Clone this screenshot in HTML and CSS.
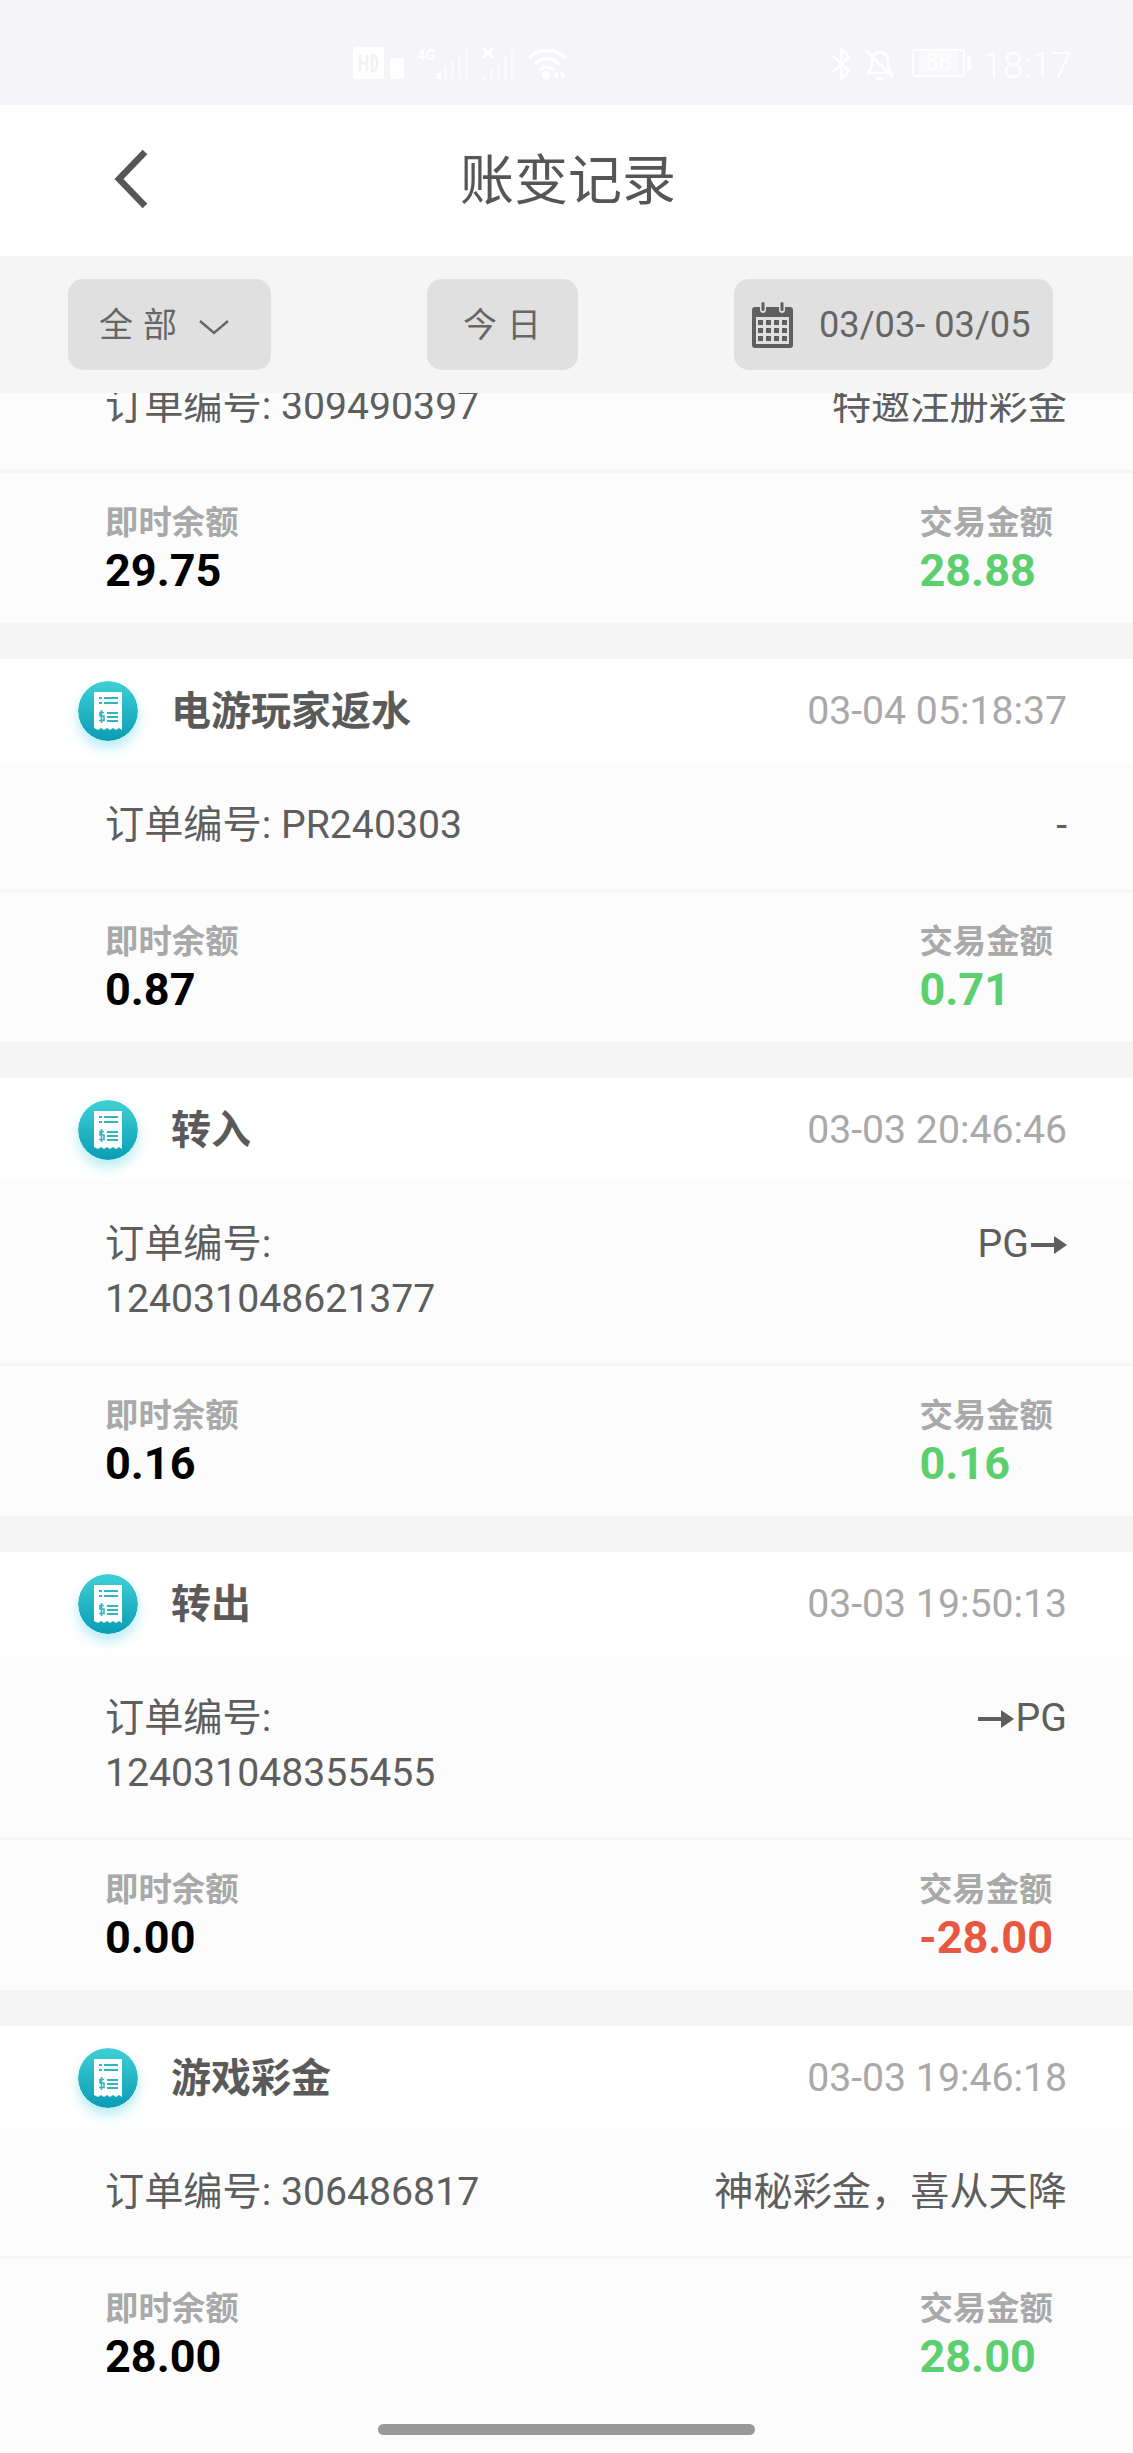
FILE: index.html
```html
<!DOCTYPE html>
<html lang="zh-CN">
<head>
    <meta charset="UTF-8">
    <title>账变记录</title>
    <link rel="stylesheet" href="styles.css">
</head>
<body>
    <!-- Iconos reutilizados -->
    <svg class="defs" width="0" height="0">
        <defs>
            <linearGradient id="tealGrad" x1="0" y1="0" x2="0" y2="1">
                <stop offset="0" stop-color="#3fd0d6"/>
                <stop offset="1" stop-color="#0a9cb4"/>
            </linearGradient>
            <symbol id="receipt" viewBox="0 0 60 60">
                <circle cx="30" cy="30" r="30" fill="url(#tealGrad)"/>
                <path d="M16 11H44V49L41 47L38 49L35 47L32 49L29 47L26 49L23 47L20 49L16 47Z" fill="#fff"/>
                <g fill="#2db6c4">
                    <rect x="21" y="16" width="3" height="2"/>
                    <rect x="26" y="16" width="14" height="2"/>
                    <rect x="21" y="21" width="3" height="2"/>
                    <rect x="26" y="21" width="14" height="2"/>
                    <rect x="29" y="31" width="11" height="2"/>
                    <rect x="29" y="35" width="11" height="2"/>
                    <rect x="29" y="39" width="11" height="2"/>
                </g>
                <path d="M26 31.5H22V35H26V39.500H21M23.500 29V42" fill="none" stroke="#2db6c4" stroke-width="1.600"/>
            </symbol>
        </defs>
    </svg>

    <div class="page">
        <!-- Barra de estado -->
        <div class="statusbar">
            <div class="status-group">
                <svg class="st-hd" width="51" height="32" viewBox="0 0 51 32">
                    <rect x="0" y="0" width="31" height="32" rx="3" fill="#fff"/>
                    <rect x="37" y="11" width="14" height="21" rx="2" fill="#fff"/>
                    <path d="M7 8V24M7 16H14M14 8V24M19 8V24C26 24 26 8 19 8Z" fill="none" stroke="#f0f0f6" stroke-width="2.500"/>
                </svg>
                <div class="st-signal">
                    <span class="st-tag">4G</span>
                    <svg width="33" height="32" viewBox="0 0 33 32">
                        <g fill="#fff">
                            <rect x="0" y="26" width="4" height="6"/>
                            <rect x="7" y="20" width="3" height="12" opacity=".55"/>
                            <rect x="14" y="14" width="3" height="18" opacity=".55"/>
                            <rect x="21" y="7" width="3" height="25" opacity=".55"/>
                            <rect x="28" y="0" width="3" height="32" opacity=".55"/>
                        </g>
                    </svg>
                </div>
                <svg class="st-cross" width="36" height="34" viewBox="0 0 36 34">
                    <path d="M1 1L11 11M11 1L1 11" stroke="#fff" stroke-width="3"/>
                    <g fill="#fff" opacity=".55">
                        <rect x="1" y="28" width="3" height="6"/>
                        <rect x="8" y="22" width="3" height="12"/>
                        <rect x="15" y="16" width="3" height="18"/>
                        <rect x="22" y="9" width="3" height="25"/>
                        <rect x="29" y="2" width="3" height="32"/>
                    </g>
                </svg>
                <svg class="st-wifi" width="40" height="33" viewBox="0 0 40 33">
                    <g fill="none" stroke="#fff" stroke-width="3.500">
                        <path d="M2 11C11 1 29 1 38 11"/>
                        <path d="M8 17C14 10 26 10 32 17"/>
                        <path d="M13 23C17 19 23 19 27 23"/>
                    </g>
                    <circle cx="19" cy="28" r="4" fill="#fff"/>
                    <path d="M31 24V32L26 28ZM34 24V32L39 28Z" fill="#fff"/>
                </svg>
            </div>
            <div class="status-group">
                <svg class="st-bt" width="21" height="34" viewBox="0 0 21 34">
                    <path d="M2 9L18 24L10 32V2L18 10L2 25" fill="none" stroke="#fff" stroke-width="2.600"/>
                </svg>
                <svg class="st-bell" width="30" height="34" viewBox="0 0 30 34">
                    <g fill="none" stroke="#fff" stroke-width="2.600">
                        <path d="M3 26H26C23 23 23 20 23 14C23 9 19 5 14.500 5C10 5 7 9 7 14C7 20 6 23 3 26Z"/>
                        <path d="M1 3L28 31"/>
                    </g>
                    <path d="M11 30H18V33H11Z" fill="#fff"/>
                </svg>
                <div class="st-battery"><span class="st-level">88</span></div>
                <span class="st-time">18:17</span>
            </div>
        </div>

        <!-- Cabecera -->
        <header class="topbar">
            <svg class="back" width="34" height="58" viewBox="0 0 34 58">
                <path d="M31 2L5 29L31 56" fill="none" stroke="#565656" stroke-width="6.500"/>
            </svg>
            <h1 class="title">账变记录</h1>
        </header>

        <!-- Filtros -->
        <div class="filters">
            <div class="chip chip-type">
                <span class="chip-label">全部</span>
                <svg class="chip-arrow" width="32" height="16" viewBox="0 0 32 16">
                    <path d="M2 2L16 14L30 2" fill="none" stroke="#666" stroke-width="2.400"/>
                </svg>
            </div>
            <div class="chip chip-today"><span class="chip-label">今日</span></div>
            <div class="chip chip-date">
                <svg width="41" height="46" viewBox="0 0 41 46">
                    <path d="M3 5H8V8C8 12 14 12 14 8V5H27V8C27 12 33 12 33 8V5H38C40 5 41 6 41 8V43C41 45 40 46 38 46H3C1 46 0 45 0 43V8C0 6 1 5 3 5Z" fill="#5f5f5f"/>
                    <rect x="9.500" y="0" width="3" height="9" rx="1.500" fill="#5f5f5f"/>
                    <rect x="28.500" y="0" width="3" height="9" rx="1.500" fill="#5f5f5f"/>
                    <rect x="4" y="15" width="33" height="27" fill="#e0e0e0"/>
                    <g fill="#5f5f5f">
                        <rect x="6" y="18" width="5" height="5"/><rect x="14" y="18" width="5" height="5"/><rect x="22" y="18" width="5" height="5"/><rect x="30" y="18" width="5" height="5"/>
                        <rect x="6" y="26" width="5" height="5"/><rect x="14" y="26" width="5" height="5"/><rect x="22" y="26" width="5" height="5"/><rect x="30" y="26" width="5" height="5"/>
                        <rect x="6" y="34" width="5" height="5"/><rect x="14" y="34" width="5" height="5"/><rect x="22" y="34" width="5" height="5"/><rect x="30" y="34" width="5" height="5"/>
                    </g>
                </svg>
                <span>03/03- 03/05</span>
            </div>
        </div>

        <!-- Lista de movimientos -->
        <div class="list">
            <section class="card card-cut">
                <div class="card-body">
                    <span class="order">订单编号: 309490397</span>
                    <span class="note">特邀注册彩金</span>
                </div>
                <div class="card-foot">
                    <div class="stat"><span class="stat-label">即时余额</span><span class="stat-value">29.75</span></div>
                    <div class="stat"><span class="stat-label">交易金额</span><span class="stat-value plus">28.88</span></div>
                </div>
            </section>

            <section class="card">
                <div class="card-head">
                    <svg class="receipt"><use href="#receipt"/></svg>
                    <span class="card-title">电游玩家返水</span>
                    <span class="card-time">03-04 05:18:37</span>
                </div>
                <div class="card-body">
                    <span class="order">订单编号: PR240303</span>
                    <span class="note">-</span>
                </div>
                <div class="card-foot">
                    <div class="stat"><span class="stat-label">即时余额</span><span class="stat-value">0.87</span></div>
                    <div class="stat"><span class="stat-label">交易金额</span><span class="stat-value plus">0.71</span></div>
                </div>
            </section>

            <section class="card">
                <div class="card-head">
                    <svg class="receipt"><use href="#receipt"/></svg>
                    <span class="card-title">转入</span>
                    <span class="card-time">03-03 20:46:46</span>
                </div>
                <div class="card-body">
                    <span class="order">订单编号: 124031048621377</span>
                    <span class="note">PG<svg class="arrow" width="36" height="18" viewBox="0 0 36 18"><path d="M0 7H23V0L36 9L23 18V11H0Z" fill="#5e5e5e"/></svg></span>
                </div>
                <div class="card-foot">
                    <div class="stat"><span class="stat-label">即时余额</span><span class="stat-value">0.16</span></div>
                    <div class="stat"><span class="stat-label">交易金额</span><span class="stat-value plus">0.16</span></div>
                </div>
            </section>

            <section class="card">
                <div class="card-head">
                    <svg class="receipt"><use href="#receipt"/></svg>
                    <span class="card-title">转出</span>
                    <span class="card-time">03-03 19:50:13</span>
                </div>
                <div class="card-body">
                    <span class="order">订单编号: 124031048355455</span>
                    <span class="note"><svg class="arrow" width="36" height="18" viewBox="0 0 36 18"><path d="M0 7H23V0L36 9L23 18V11H0Z" fill="#5e5e5e"/></svg>PG</span>
                </div>
                <div class="card-foot">
                    <div class="stat"><span class="stat-label">即时余额</span><span class="stat-value">0.00</span></div>
                    <div class="stat"><span class="stat-label">交易金额</span><span class="stat-value minus">-28.00</span></div>
                </div>
            </section>

            <section class="card card-last">
                <div class="card-head">
                    <svg class="receipt"><use href="#receipt"/></svg>
                    <span class="card-title">游戏彩金</span>
                    <span class="card-time">03-03 19:46:18</span>
                </div>
                <div class="card-body">
                    <span class="order">订单编号: 306486817</span>
                    <span class="note">神秘彩金，喜从天降</span>
                </div>
                <div class="card-foot">
                    <div class="stat"><span class="stat-label">即时余额</span><span class="stat-value">28.00</span></div>
                    <div class="stat"><span class="stat-label">交易金额</span><span class="stat-value plus">28.00</span></div>
                </div>
            </section>
        </div>

        <div class="home-bar"></div>
    </div>
</body>
</html>
```

FILE: styles.css
```css
/* Base */
html, body {
    margin: 0;
    height: 100%;
    overflow: hidden;
}
body {
    background: #f5f5f5;
    font-family: Roboto, "Noto Sans CJK SC", sans-serif;
    color: #5e5e5e;
}
.defs {
    position: absolute;
}
.page {
    position: relative;
    height: 2453px;
    display: flex;
    flex-direction: column;
    overflow: hidden;
}

/* Barra de estado */
.statusbar {
    height: 105px;
    flex: none;
    box-sizing: border-box;
    background: #f4f4f9;
    padding: 47px 61px 0 353px;
    display: flex;
    justify-content: space-between;
    align-items: flex-start;
    color: #fff;
}
.status-group {
    display: flex;
    align-items: flex-start;
}
.st-signal {
    display: flex;
    align-items: flex-start;
    margin-left: 13px;
    position: relative;
    padding-left: 20px;
}
.st-tag {
    position: absolute;
    left: 0;
    top: 0;
    font-size: 15px;
    line-height: 16px;
    font-weight: 700;
}
.st-cross {
    margin-left: 12px;
}
.st-wifi {
    margin-left: 9px;
}
.st-bell {
    margin-left: 13px;
}
.st-battery {
    margin-left: 17px;
    margin-top: 2px;
    width: 53px;
    height: 28px;
    box-sizing: border-box;
    border: 2px solid #fff;
    border-radius: 4px;
    position: relative;
    display: flex;
    justify-content: center;
    align-items: center;
}
.st-battery::after {
    content: "";
    position: absolute;
    right: -8px;
    top: 5px;
    width: 4px;
    height: 14px;
    background: #fff;
    border-radius: 1px;
}
.st-level {
    font-size: 23px;
    line-height: 24px;
    width: 39px;
    text-align: center;
    background: rgba(255,255,255,.45);
}
.st-time {
    margin-left: 17px;
    font-size: 37px;
    line-height: 38px;
    font-weight: 300;
}

/* Cabecera */
.topbar {
    height: 151px;
    flex: none;
    box-sizing: border-box;
    background: #fff;
    display: flex;
    justify-content: center;
    align-items: center;
    position: relative;
}
.back {
    position: absolute;
    left: 114px;
    top: 45px;
}
.title {
    margin: 0 0 8px 3px;
    font-size: 54px;
    font-weight: 400;
    color: #565656;
}

/* Filtros */
.filters {
    height: 137px;
    flex: none;
    box-sizing: border-box;
    background: #f5f5f5;
    padding: 23px 80px 23px 68px;
    display: flex;
    justify-content: space-between;
    align-items: stretch;
    position: relative;
    z-index: 1;
}
.chip {
    background: #e0e0e0;
    border-radius: 15px;
    display: flex;
    align-items: center;
    box-sizing: border-box;
    color: #666;
    font-size: 36.2px;
}
.chip-label {
    font-size: 34px;
    letter-spacing: 10px;
    margin-bottom: 4px;
}
.chip-arrow {
    margin: 4px 0 0 3px;
}
.chip-type {
    width: 203px;
    padding-left: 31px;
    gap: 8px;
}
.chip-today {
    width: 151px;
    padding-left: 36px;
}
.chip-date {
    width: 319px;
    padding-left: 18px;
    gap: 26px;
}

/* Lista */
.list {
    flex: 1;
    min-height: 0;
    overflow: hidden;
    display: flex;
    flex-direction: column;
    gap: 36px;
}
.card {
    flex: none;
    background: #fff;
}
.card-cut {
    margin-top: -50px;
}
.card-last {
    flex: 1;
    background: #fcfcfc;
}
.card-head {
    height: 103px;
    background: #fff;
    display: flex;
    align-items: center;
    padding: 0 66px 0 78px;
}
.receipt {
    width: 60px;
    height: 60px;
    flex: none;
    border-radius: 50%;
    box-shadow: 0 7px 12px rgba(50,200,220,.35);
}
.card-title {
    margin: 0 0 6px 33px;
    font-size: 40px;
    font-weight: 700;
    color: #5a5a5a;
}
.card-time {
    margin-left: auto;
    font-size: 39.2px;
    color: #a9a9a9;
}
.card-body {
    background: #fcfcfc;
    padding: 36px 66px 36px 105px;
    display: flex;
    justify-content: space-between;
    align-items: flex-start;
    font-size: 39.2px;
    line-height: 55px;
    border-bottom: 3px solid #f6f6f6;
}
.order {
    max-width: 400px;
}
.note {
    display: flex;
    align-items: center;
    gap: 2px;
}
.card-foot {
    background: #fcfcfc;
    height: 150px;
    box-sizing: border-box;
    padding: 27px 80px 0 105px;
    display: flex;
    justify-content: space-between;
}
.stat {
    display: flex;
    flex-direction: column;
}
.stat-label {
    font-size: 33.4px;
    line-height: 46px;
    font-weight: 700;
    color: #a9a9a9;
}
.stat-value {
    font-size: 45px;
    line-height: 50px;
    font-weight: 700;
    color: #000;
}
.plus {
    color: #5ccf6f;
}
.minus {
    color: #e8573f;
}

/* Indicador inferior */
.home-bar {
    position: absolute;
    left: 378px;
    top: 2424px;
    width: 377px;
    height: 11px;
    border-radius: 6px;
    background: #999;
}
```
